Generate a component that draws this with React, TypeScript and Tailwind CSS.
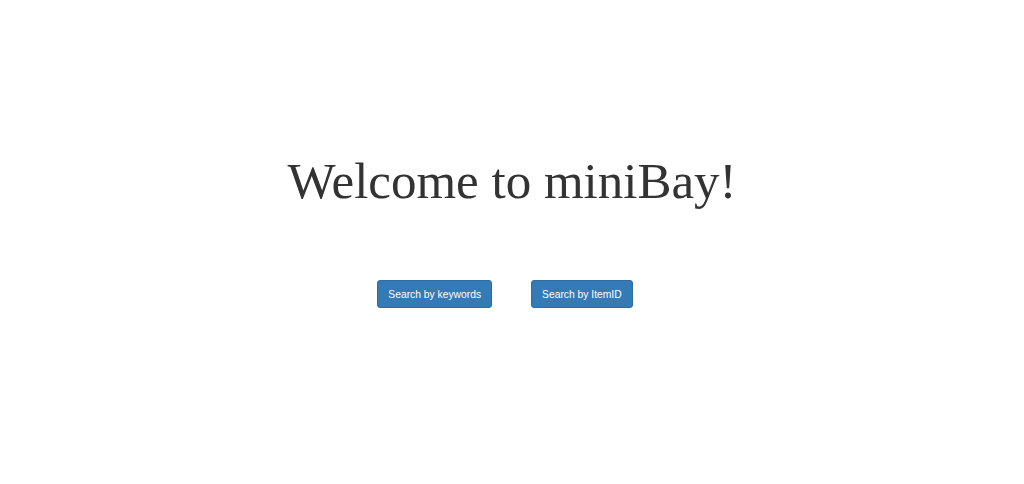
import React from 'react';

const App: React.FC = () => {
    return (
        <div className="w-full h-[484px] bg-white flex flex-col items-center">
            <h1 className="mt-[151px] text-[51px] leading-[61px] text-[#333333] font-['Liberation_Serif',serif]">
                Welcome to miniBay!
            </h1>
            <div className="mt-[68px] flex gap-[39px] mr-[14px]">
                <button className="h-[28px] pt-px px-[10px] rounded-[3px] bg-[#337ab7] border border-[#2e6da4] text-white text-[10.3px] font-['Liberation_Sans',sans-serif]">
                    Search by keywords
                </button>
                <button className="h-[28px] pt-px px-[10px] rounded-[3px] bg-[#337ab7] border border-[#2e6da4] text-white text-[10.3px] font-['Liberation_Sans',sans-serif]">
                    Search by ItemID
                </button>
            </div>
        </div>
    );
};

export default App;
